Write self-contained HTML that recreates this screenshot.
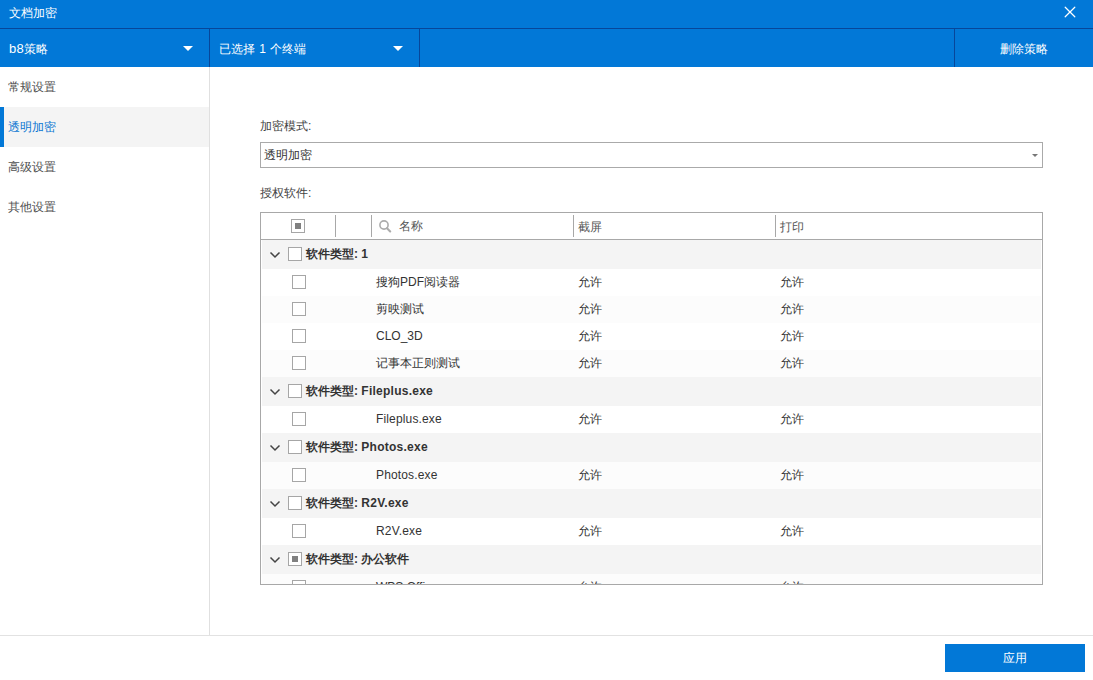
<!DOCTYPE html>
<html><head><meta charset="utf-8">
<style>
*{margin:0;padding:0;box-sizing:border-box}
html,body{width:1093px;height:680px;overflow:hidden;background:#fff;font-family:"Liberation Sans",sans-serif;font-size:12px;color:#333}
.abs{position:absolute}
#title{left:0;top:0;width:1093px;height:28px;background:#0278d7}
#tline{left:0;top:28px;width:1093px;height:1px;background:#07469a}
#tool{left:0;top:29px;width:1093px;height:38px;background:#0278d7}
.vl{position:absolute;width:1px;background:#07469a}
.wt{position:absolute;color:#fff;font-size:12px;line-height:16px;white-space:nowrap}
.tri{position:absolute;width:0;height:0;border-left:5px solid transparent;border-right:5px solid transparent;border-top:5px solid #fff}
#side{left:0;top:67px;width:210px;height:568px;border-right:1px solid #e0e0e0}
.si{position:absolute;left:0;width:209px;height:40px;line-height:40px;padding-left:8px;color:#505050;font-size:12px}
.si.sel{background:#f4f4f4;color:#0b76d2}
.si.sel::before{content:"";position:absolute;left:0;top:0;width:4px;height:40px;background:#0278d7}
#hline{left:0;top:635px;width:1093px;height:1px;background:#e2e2e2}
#apply{left:945px;top:644px;width:140px;height:28px;background:#0278d7;color:#fff;text-align:center;line-height:28px;font-size:12px}
.lbl{position:absolute;left:260px;font-size:12px;line-height:16px;color:#444;white-space:nowrap}
#sel{left:260px;top:142px;width:783px;height:26px;border:1px solid #aaa;background:#fff}
#sel span{position:absolute;left:3px;top:4px;line-height:16px;color:#333}
#table{left:260px;top:212px;width:783px;height:373px;border:1px solid #a8a8a8;overflow:hidden;background:#fff}
.row{position:absolute;left:0;width:781px}
.cb{position:absolute;width:14px;height:14px;border:1px solid #a6a6a6;background:#fff}
.cb.ind::after{content:"";position:absolute;left:3px;top:3px;width:6px;height:6px;background:#808080}
.txt{position:absolute;line-height:16px;white-space:nowrap;color:#333}
.b{font-weight:bold;color:#333}
.bg{position:absolute;left:1px;width:779px}
.sep{position:absolute;width:1px;height:22px;background:#a8a8a8}
.hd{color:#555}
.ls{letter-spacing:0.25px}
</style></head><body>
<div id="title" class="abs"></div>
<div class="wt" style="left:9px;top:5px">文档加密</div>
<svg class="abs" style="left:1064px;top:6px" width="12" height="12" viewBox="0 0 12 12"><path d="M1.2 1.2L10.8 10.8M10.8 1.2L1.2 10.8" stroke="#fff" stroke-width="1.25" stroke-linecap="round"/></svg>
<div id="tline" class="abs"></div>
<div id="tool" class="abs"></div>
<div class="vl" style="left:209px;top:29px;height:38px"></div>
<div class="vl" style="left:419px;top:29px;height:38px"></div>
<div class="vl" style="left:954px;top:29px;height:38px"></div>
<div class="wt" style="left:9px;top:41px"><span style="font-size:13px;letter-spacing:0.3px">b8</span>策略</div>
<div class="tri" style="left:183px;top:46px"></div>
<div class="wt" style="left:219px;top:41px;word-spacing:1px">已选择 1 个终端</div>
<div class="tri" style="left:393px;top:46px"></div>
<div class="wt" style="left:1000px;top:41px">删除策略</div>

<div id="side" class="abs">
  <div class="si" style="top:0">常规设置</div>
  <div class="si sel" style="top:40px">透明加密</div>
  <div class="si" style="top:80px">高级设置</div>
  <div class="si" style="top:120px">其他设置</div>
</div>
<div id="hline" class="abs"></div>
<div id="apply" class="abs">应用</div>

<div class="lbl" style="top:118px">加密模式:</div>
<div id="sel" class="abs"><span>透明加密</span>
  <div class="abs" style="left:771px;top:11px;width:0;height:0;border-left:3px solid transparent;border-right:3px solid transparent;border-top:3px solid #777"></div>
</div>
<div class="lbl" style="top:185px">授权软件:</div>

<div id="table" class="abs">
<div class="abs" style="left:0;width:781px;top:26px;height:1px;background:#a8a8a8"></div>
<div class="bg" style="top:27px;height:29px;background:#f4f4f4"></div>
<svg class="abs" style="left:8px;top:38px" width="12" height="8" viewBox="0 0 12 8"><path d="M1.5 1.5L6 6L10.5 1.5" fill="none" stroke="#444" stroke-width="1.5"/></svg>
<div class="cb" style="left:27px;top:34px"></div>
<div class="txt b" style="left:45px;top:27px;height:29px;line-height:29px">软件类型: 1</div>
<div class="bg" style="top:56px;height:27px;background:#fff"></div>
<div class="cb" style="left:31px;top:62px"></div>
<div class="txt" style="left:115px;top:56px;height:27px;line-height:27px">搜狗PDF阅读器</div>
<div class="txt" style="left:317px;top:56px;height:27px;line-height:27px">允许</div>
<div class="txt" style="left:519px;top:56px;height:27px;line-height:27px">允许</div>
<div class="bg" style="top:83px;height:27px;background:#fcfcfc"></div>
<div class="cb" style="left:31px;top:89px"></div>
<div class="txt" style="left:115px;top:83px;height:27px;line-height:27px">剪映测试</div>
<div class="txt" style="left:317px;top:83px;height:27px;line-height:27px">允许</div>
<div class="txt" style="left:519px;top:83px;height:27px;line-height:27px">允许</div>
<div class="bg" style="top:110px;height:27px;background:#fff"></div>
<div class="cb" style="left:31px;top:116px"></div>
<div class="txt" style="left:115px;top:110px;height:27px;line-height:27px">CLO_3D</div>
<div class="txt" style="left:317px;top:110px;height:27px;line-height:27px">允许</div>
<div class="txt" style="left:519px;top:110px;height:27px;line-height:27px">允许</div>
<div class="bg" style="top:137px;height:27px;background:#fcfcfc"></div>
<div class="cb" style="left:31px;top:143px"></div>
<div class="txt" style="left:115px;top:137px;height:27px;line-height:27px">记事本正则测试</div>
<div class="txt" style="left:317px;top:137px;height:27px;line-height:27px">允许</div>
<div class="txt" style="left:519px;top:137px;height:27px;line-height:27px">允许</div>
<div class="bg" style="top:164px;height:29px;background:#f4f4f4"></div>
<svg class="abs" style="left:8px;top:175px" width="12" height="8" viewBox="0 0 12 8"><path d="M1.5 1.5L6 6L10.5 1.5" fill="none" stroke="#444" stroke-width="1.5"/></svg>
<div class="cb" style="left:27px;top:171px"></div>
<div class="txt b" style="left:45px;top:164px;height:29px;line-height:29px">软件类型: <span class="ls">Fileplus.exe</span></div>
<div class="bg" style="top:193px;height:27px;background:#fff"></div>
<div class="cb" style="left:31px;top:199px"></div>
<div class="txt" style="left:115px;top:193px;height:27px;line-height:27px"><span style="letter-spacing:0.15px">Fileplus.exe</span></div>
<div class="txt" style="left:317px;top:193px;height:27px;line-height:27px">允许</div>
<div class="txt" style="left:519px;top:193px;height:27px;line-height:27px">允许</div>
<div class="bg" style="top:220px;height:29px;background:#f4f4f4"></div>
<svg class="abs" style="left:8px;top:231px" width="12" height="8" viewBox="0 0 12 8"><path d="M1.5 1.5L6 6L10.5 1.5" fill="none" stroke="#444" stroke-width="1.5"/></svg>
<div class="cb" style="left:27px;top:227px"></div>
<div class="txt b" style="left:45px;top:220px;height:29px;line-height:29px">软件类型: <span class="ls">Photos.exe</span></div>
<div class="bg" style="top:249px;height:27px;background:#fcfcfc"></div>
<div class="cb" style="left:31px;top:255px"></div>
<div class="txt" style="left:115px;top:249px;height:27px;line-height:27px"><span style="letter-spacing:0.15px">Photos.exe</span></div>
<div class="txt" style="left:317px;top:249px;height:27px;line-height:27px">允许</div>
<div class="txt" style="left:519px;top:249px;height:27px;line-height:27px">允许</div>
<div class="bg" style="top:276px;height:29px;background:#f4f4f4"></div>
<svg class="abs" style="left:8px;top:287px" width="12" height="8" viewBox="0 0 12 8"><path d="M1.5 1.5L6 6L10.5 1.5" fill="none" stroke="#444" stroke-width="1.5"/></svg>
<div class="cb" style="left:27px;top:283px"></div>
<div class="txt b" style="left:45px;top:276px;height:29px;line-height:29px">软件类型: <span class="ls">R2V.exe</span></div>
<div class="bg" style="top:305px;height:27px;background:#fff"></div>
<div class="cb" style="left:31px;top:311px"></div>
<div class="txt" style="left:115px;top:305px;height:27px;line-height:27px"><span style="letter-spacing:0.15px">R2V.exe</span></div>
<div class="txt" style="left:317px;top:305px;height:27px;line-height:27px">允许</div>
<div class="txt" style="left:519px;top:305px;height:27px;line-height:27px">允许</div>
<div class="bg" style="top:332px;height:29px;background:#f4f4f4"></div>
<svg class="abs" style="left:8px;top:343px" width="12" height="8" viewBox="0 0 12 8"><path d="M1.5 1.5L6 6L10.5 1.5" fill="none" stroke="#444" stroke-width="1.5"/></svg>
<div class="cb ind" style="left:27px;top:339px"></div>
<div class="txt b" style="left:45px;top:332px;height:29px;line-height:29px">软件类型: 办公软件</div>
<div class="bg" style="top:361px;height:27px;background:#fcfcfc"></div>
<div class="cb" style="left:31px;top:367px"></div>
<div class="txt" style="left:115px;top:361px;height:27px;line-height:27px">WPS Office</div>
<div class="txt" style="left:317px;top:361px;height:27px;line-height:27px">允许</div>
<div class="txt" style="left:519px;top:361px;height:27px;line-height:27px">允许</div>
<div class="cb ind" style="left:30px;top:6px"></div>
<div class="sep" style="left:74px;top:2px"></div>
<div class="sep" style="left:110px;top:2px"></div>
<div class="sep" style="left:312px;top:2px"></div>
<div class="sep" style="left:514px;top:2px"></div>
<svg class="abs" style="left:117px;top:6px" width="14" height="14" viewBox="0 0 14 14"><circle cx="6" cy="6" r="4.1" fill="none" stroke="#acacac" stroke-width="1.6"/><path d="M9 9.2L12.2 12.4" stroke="#acacac" stroke-width="2.1" stroke-linecap="round"/></svg>
<div class="txt hd" style="left:138px;top:0px;height:26px;line-height:26px">名称</div>
<div class="txt hd" style="left:317px;top:1px;height:26px;line-height:26px">截屏</div>
<div class="txt hd" style="left:519px;top:1px;height:26px;line-height:26px">打印</div>
</div>
</body></html>
